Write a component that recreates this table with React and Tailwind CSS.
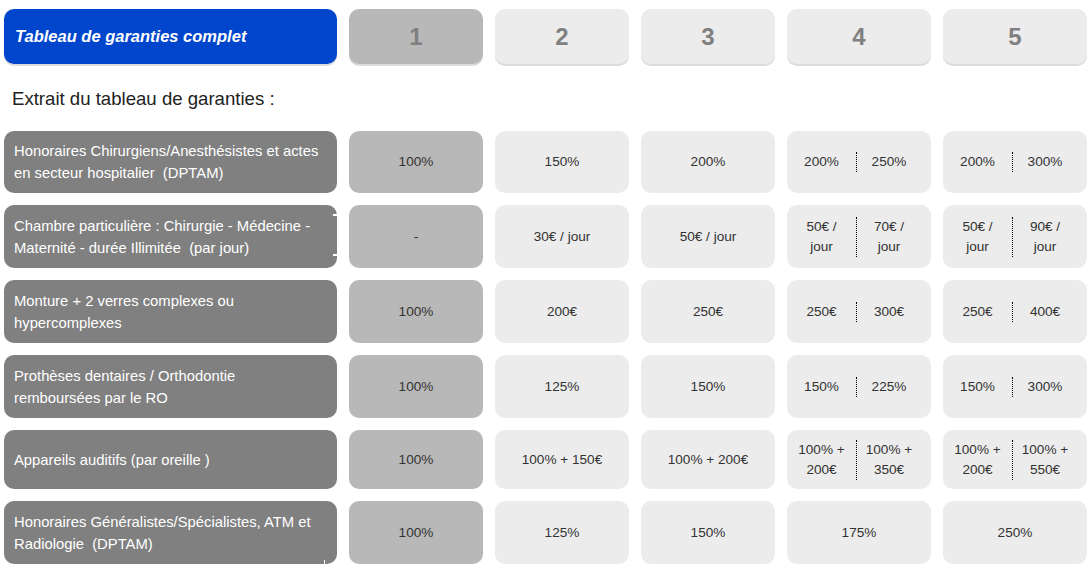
const columns = ["1", "2", "3", "4", "5"];

const rows = [
  {
    label: "Honoraires Chirurgiens/Anesthésistes et actes en secteur hospitalier\u00a0 (DPTAM)",
    h: "h-[62px]",
    values: ["100%", "150%", "200%", ["200%", "250%"], ["200%", "300%"]],
  },
  {
    label: "Chambre particulière : Chirurgie - Médecine - Maternité - durée Illimitée\u00a0 (par jour)",
    h: "h-[63px]",
    ticks: true,
    values: ["-", "30€ / jour", "50€ / jour", ["50€ / jour", "70€ / jour"], ["50€ / jour", "90€ / jour"]],
  },
  {
    label: "Monture + 2 verres complexes ou hypercomplexes",
    h: "h-[63px]",
    values: ["100%", "200€", "250€", ["250€", "300€"], ["250€", "400€"]],
  },
  {
    label: "Prothèses dentaires / Orthodontie remboursées par le RO",
    h: "h-[63px]",
    values: ["100%", "125%", "150%", ["150%", "225%"], ["150%", "300%"]],
  },
  {
    label: "Appareils auditifs (par oreille )",
    h: "h-[59px]",
    values: ["100%", "100% + 150€", "100% + 200€", ["100% + 200€", "100% + 350€"], ["100% + 200€", "100% + 550€"]],
  },
  {
    label: "Honoraires Généralistes/Spécialistes, ATM et Radiologie\u00a0 (DPTAM)",
    h: "h-[63px]",
    mark: true,
    values: ["100%", "125%", "150%", "175%", "250%"],
  },
];

const ValueCell = ({ value, first }) => {
  const bg = first ? "bg-[#b8b8b8]" : "bg-[#ececec]";
  if (Array.isArray(value)) {
    return (
      <div className={`${bg} rounded-[10px] flex items-center pr-[10px] text-[13.6px] leading-[20px] text-[#333]`}>
        <div className="w-[69px] px-[9px] text-center">{value[0]}</div>
        <div className="flex-1 border-l border-dotted border-black px-[6px] text-center">{value[1]}</div>
      </div>
    );
  }
  return (
    <div className={`${bg} rounded-[10px] flex items-center justify-center text-center text-[13.6px] leading-[20px] text-[#333]`}>
      {value}
    </div>
  );
};

const App = () => {
  return (
    <div className="w-[1091px] h-[570px] bg-white px-[4px] pt-[9px] font-['Liberation_Sans',Arial,sans-serif] overflow-hidden">
      <div className="grid grid-cols-[333px_134px_134px_134px_144px_144px] gap-x-[12px]">
        <div className="h-[55px] bg-[#0046cc] rounded-[10px] shadow-[0_2px_0_#dcdcdc] flex items-center pl-[11px] text-white text-[16.5px] font-bold italic">
          Tableau de garanties complet
        </div>
        {columns.map((c, i) => (
          <div
            key={c}
            className={`h-[55px] rounded-[10px] shadow-[0_2px_0_#dcdcdc] flex items-center justify-center text-[24px] font-bold text-[#808080] ${
              i === 0 ? "bg-[#b8b8b8]" : "bg-[#ececec]"
            }`}
          >
            {c}
          </div>
        ))}
      </div>

      <div className="h-[67px] flex items-center pl-[8px] pt-[3px] text-[18.6px] text-[#222]">
        Extrait du tableau de garanties :
      </div>

      <div className="flex flex-col gap-y-[12px]">
        {rows.map((row) => (
          <div key={row.label} className={`grid grid-cols-[333px_134px_134px_134px_144px_144px] gap-x-[12px] ${row.h}`}>
            <div className="relative bg-[#808080] rounded-[10px] flex items-center pl-[10px] pr-[16px] text-white text-[14.8px] leading-[22px]">
              {row.label}
              {row.ticks && (
                <>
                  <span className="absolute right-0 top-[9px] w-[4px] h-[2px] bg-white" />
                  <span className="absolute right-0 bottom-[12px] w-[4px] h-[2px] bg-white" />
                </>
              )}
              {row.mark && <span className="absolute right-[12px] bottom-0 w-[1px] h-[4px] bg-white" />}
            </div>
            {row.values.map((v, i) => (
              <ValueCell key={i} value={v} first={i === 0} />
            ))}
          </div>
        ))}
      </div>
    </div>
  );
};

export default App;
